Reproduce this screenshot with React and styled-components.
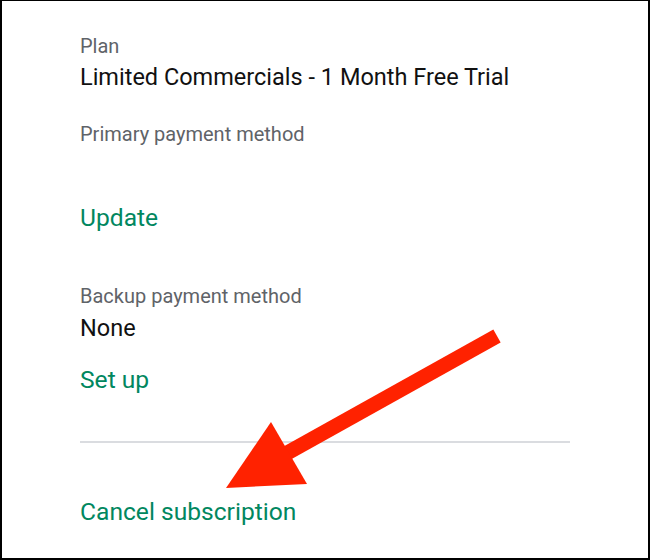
import React from "react";
import styled, { createGlobalStyle } from "styled-components";

const Global = createGlobalStyle`
  html, body { margin: 0; padding: 0; background: #fff; }
  body { font-family: Roboto, "Noto Sans", Arial, sans-serif; }
  * { box-sizing: border-box; }
`;

const Frame = styled.div`
  position: relative;
  width: 650px;
  height: 560px;
  border-style: solid;
  border-color: #000;
  border-width: 1px 2px 2px 2px;
  background: #fff;
  overflow: hidden;
`;

const Content = styled.div`
  display: flex;
  flex-direction: column;
  align-items: flex-start;
  padding: 33px 0 0 78px;
  width: 570px;
`;

const Section = styled.div`
  display: flex;
  flex-direction: column;
  align-items: flex-start;
  margin-top: ${(p) => p.$mt || 0}px;
`;

const Label = styled.div`
  font-size: 20px;
  line-height: 24px;
  color: #5f6368;
`;

const Value = styled.div`
  font-size: 23.5px;
  line-height: 30px;
  color: #111;
  margin-top: ${(p) => p.$mt ?? 4}px;
`;

const Link = styled.a`
  display: block;
  font-size: 24.6px;
  line-height: 30px;
  color: #01875f;
  text-decoration: none;
  margin-top: ${(p) => p.$mt || 0}px;
`;

const Divider = styled.hr`
  align-self: stretch;
  border: none;
  border-top: 2px solid #dadce0;
  margin: ${(p) => p.$mt || 0}px 0 0 0;
  width: 490px;
`;

const Overlay = styled.svg`
  position: absolute;
  left: -2px;
  top: -1px;
  pointer-events: none;
`;

export default function App() {
  return (
    <>
      <Global />
      <Frame>
        <Content>
          <Section>
            <Label>Plan</Label>
            <Value $mt={4}>Limited Commercials - 1 Month Free Trial</Value>
          </Section>
          <Section $mt={30}>
            <Label>Primary payment method</Label>
            <Link $mt={57}>Update</Link>
          </Section>
          <Section $mt={51}>
            <Label>Backup payment method</Label>
            <Value $mt={5}>None</Value>
            <Link $mt={22}>Set up</Link>
          </Section>
          <Divider $mt={46} />
          <Link $mt={54}>Cancel subscription</Link>
        </Content>
        <Overlay width="650" height="560" viewBox="0 0 650 560">
          <line x1="497" y1="336" x2="280" y2="457" stroke="#ff2200" strokeWidth="15" />
          <polygon points="271,422 307,484 226,488" fill="#ff2200" />
        </Overlay>
      </Frame>
    </>
  );
}
